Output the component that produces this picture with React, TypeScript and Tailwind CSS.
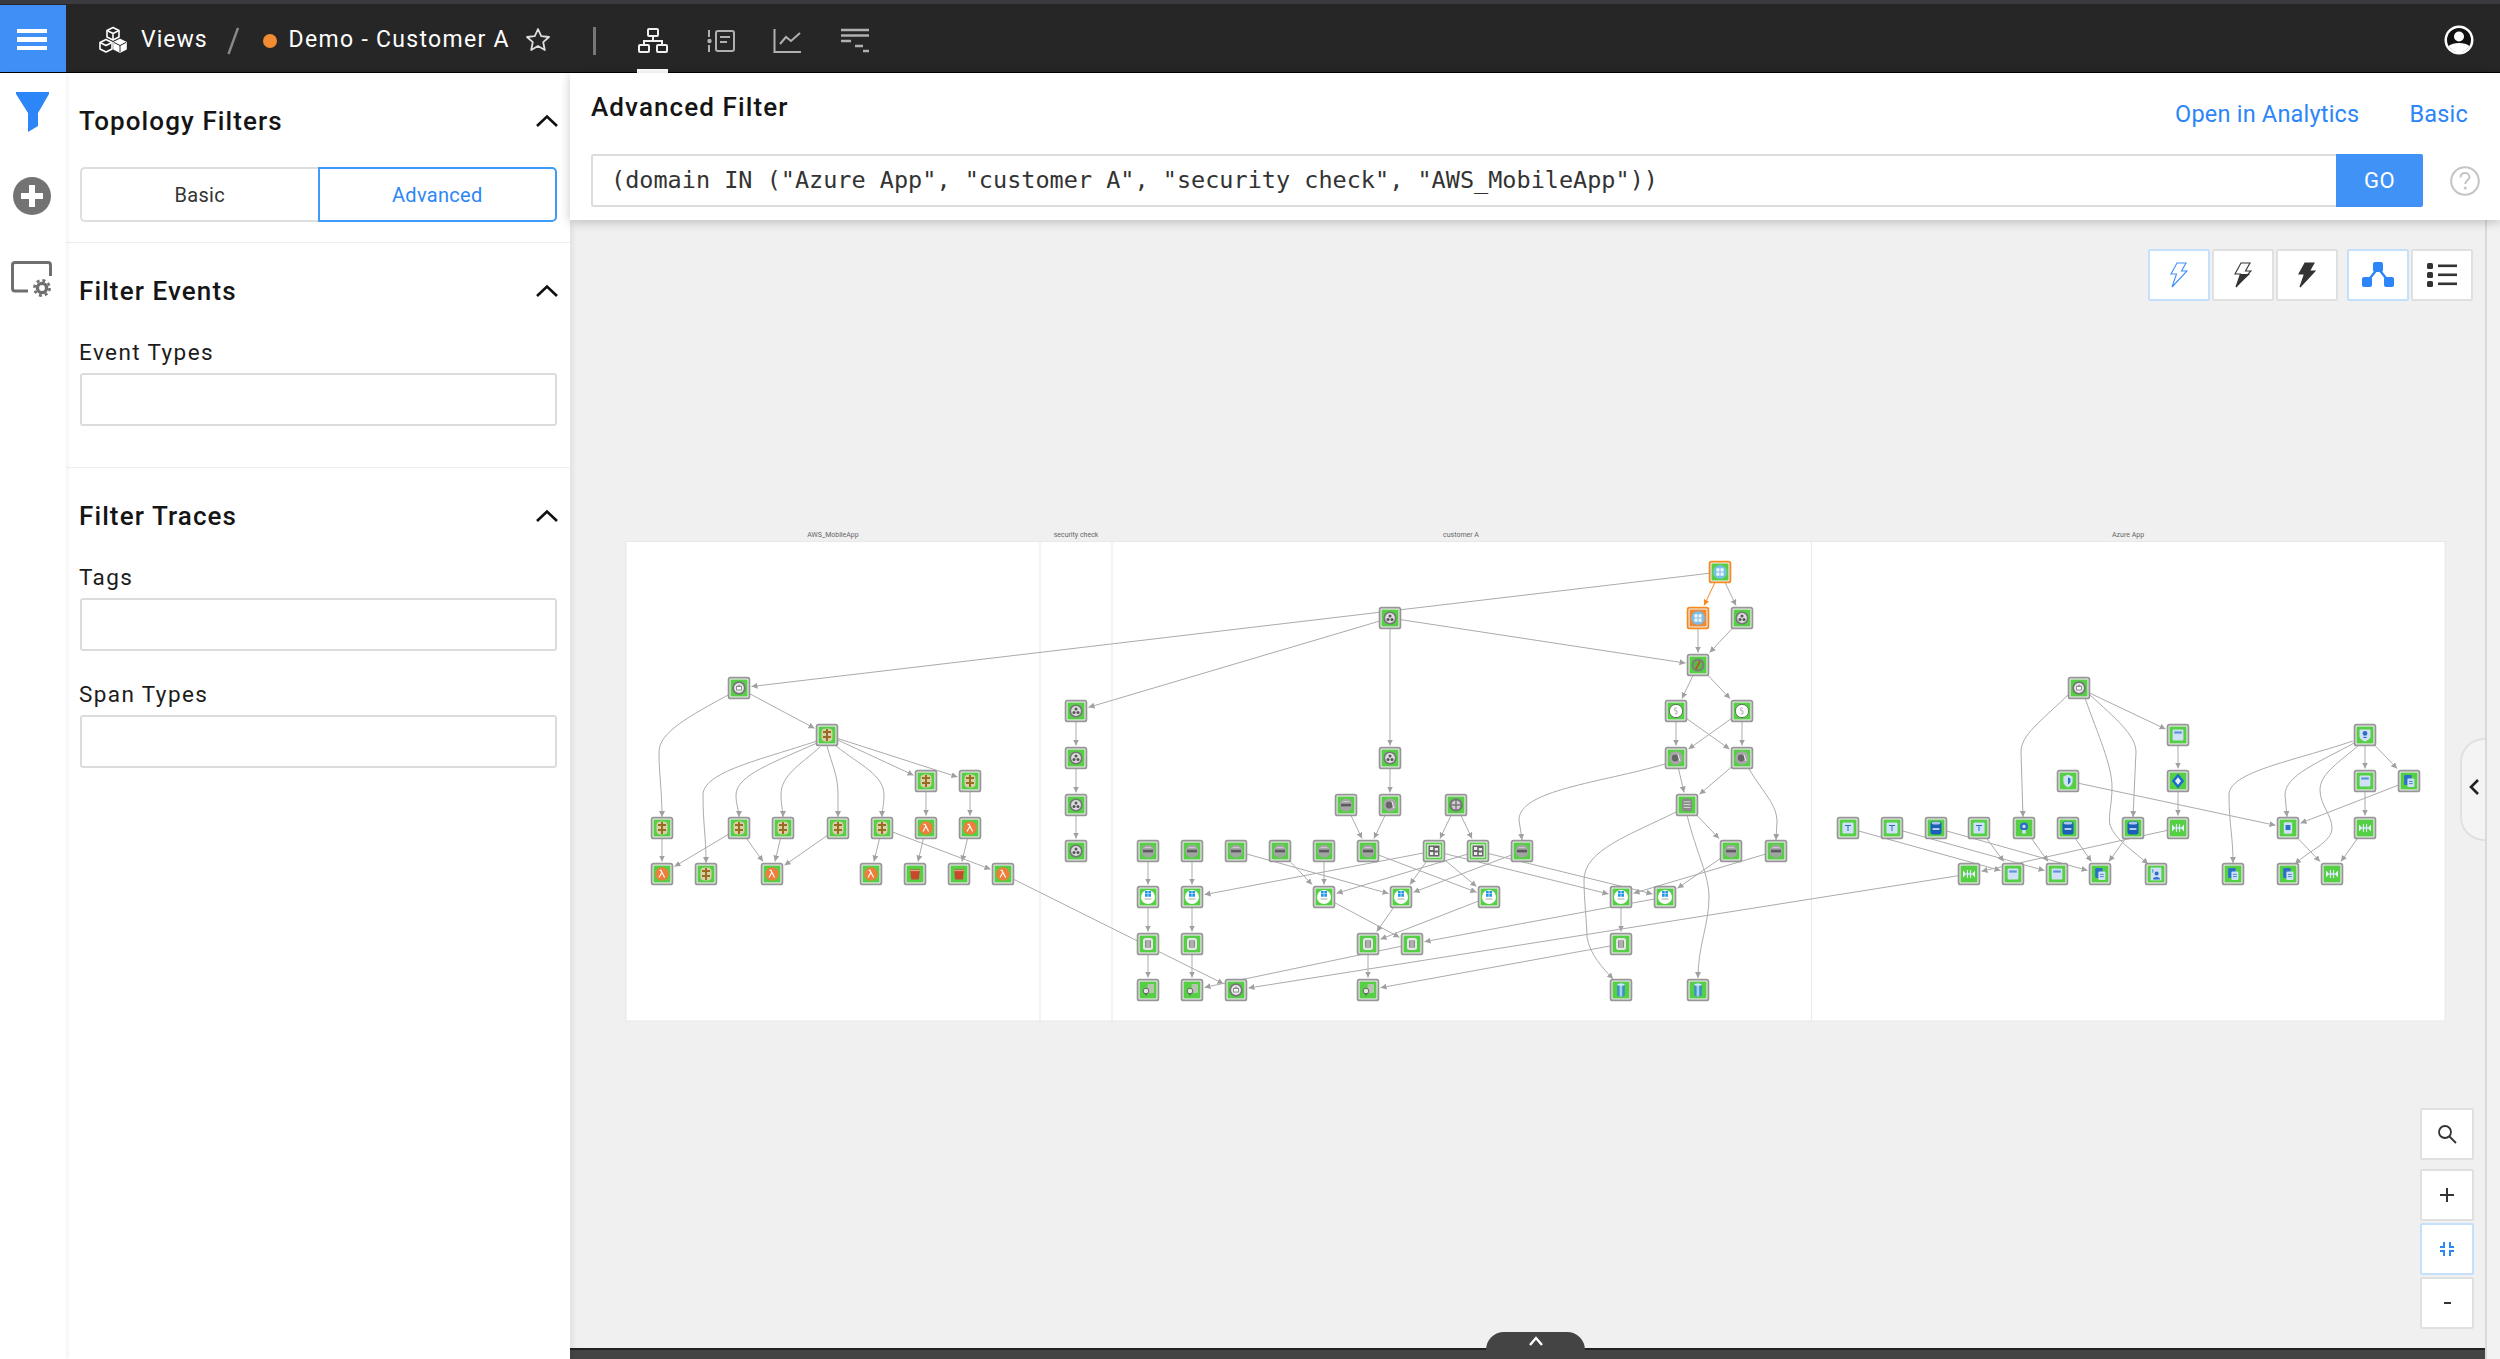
import React from "react";

type Kind = "gw" | "api" | "lam" | "bucket" | "hub" | "web" | "win" | "chip" | "pin" | "grid" | "globe" | "mag" | "clock" | "compass" | "dbgray" | "db" | "azwin" | "table" | "sql" | "bulb" | "dumb" | "shield" | "shieldd" | "diamond" | "phone" | "store" | "doc" | "person";
type N = [number, number, Kind, number?];

const nodes: N[] = [
  [739, 688, "gw"], [827, 735, "api"], [926, 781, "api"], [970, 781, "api"],
  [662, 828, "api"], [739, 828, "api"], [783, 828, "api"], [838, 828, "api"], [882, 828, "api"], [926, 828, "lam"], [970, 828, "lam"],
  [662, 874, "lam"], [706, 874, "api"], [772, 874, "lam"], [871, 874, "lam"], [915, 874, "bucket"], [959, 874, "bucket"], [1003, 874, "lam"],
  [1076, 711, "hub"], [1076, 758, "hub"], [1076, 805, "hub"], [1076, 851, "hub"],
  [1720, 572, "azwin", 1], [1698, 618, "azwin", 2], [1742, 618, "hub"], [1390, 618, "hub"], [1698, 665, "compass"],
  [1676, 711, "clock"], [1742, 711, "clock"], [1676, 758, "mag"], [1742, 758, "mag"], [1390, 758, "hub"],
  [1346, 805, "web"], [1390, 805, "mag"], [1456, 805, "globe"], [1687, 805, "dbgray"],
  [1148, 851, "web"], [1192, 851, "web"], [1236, 851, "web"], [1280, 851, "web"], [1324, 851, "web"], [1368, 851, "web"], [1434, 851, "grid"], [1478, 851, "grid"], [1522, 851, "web"], [1731, 851, "web"], [1776, 851, "web"],
  [1148, 897, "win"], [1192, 897, "win"], [1324, 897, "win"], [1401, 897, "win"], [1489, 897, "win"], [1621, 897, "win"], [1665, 897, "win"],
  [1148, 944, "chip"], [1192, 944, "chip"], [1368, 944, "chip"], [1412, 944, "chip"], [1621, 944, "chip"],
  [1148, 990, "pin"], [1192, 990, "pin"], [1236, 990, "gw"], [1368, 990, "pin"], [1621, 990, "db"], [1698, 990, "db"],
  [2079, 688, "gw"], [2178, 735, "store"], [2365, 735, "shieldd"], [2068, 781, "shield"], [2178, 781, "diamond"], [2365, 781, "store"], [2409, 781, "doc"],
  [1848, 828, "table"], [1892, 828, "table"], [1936, 828, "sql"], [1979, 828, "table"], [2024, 828, "bulb"], [2068, 828, "sql"], [2133, 828, "sql"], [2178, 828, "dumb"], [2288, 828, "phone"], [2365, 828, "dumb"],
  [1969, 874, "dumb"], [2013, 874, "store"], [2057, 874, "store"], [2100, 874, "doc"], [2156, 874, "person"], [2233, 874, "doc"], [2288, 874, "doc"], [2332, 874, "dumb"],
];

const straight: [number, number, number, number, number?][] = [
  [1720, 572, 739, 688], [739, 688, 827, 735], [827, 735, 926, 781], [827, 735, 970, 781], [926, 781, 926, 828], [970, 781, 970, 828],
  [662, 828, 662, 874], [739, 828, 662, 874], [739, 828, 772, 874], [783, 828, 772, 874], [838, 828, 772, 874], [882, 828, 871, 874], [926, 828, 915, 874], [970, 828, 959, 874], [882, 828, 1003, 874], [1003, 874, 1236, 990],
  [1390, 618, 1076, 711], [1076, 711, 1076, 758], [1076, 758, 1076, 805], [1076, 805, 1076, 851],
  [1390, 618, 1698, 665], [1390, 618, 1390, 758], [1390, 758, 1390, 805], [1346, 805, 1368, 851], [1390, 805, 1368, 851], [1456, 805, 1434, 851], [1456, 805, 1478, 851],
  [1720, 572, 1698, 618, 1], [1720, 572, 1742, 618], [1698, 618, 1698, 665], [1742, 618, 1698, 665], [1698, 665, 1676, 711], [1698, 665, 1742, 711],
  [1676, 711, 1676, 758], [1676, 711, 1742, 758], [1742, 711, 1676, 758], [1742, 711, 1742, 758], [1676, 758, 1687, 805], [1742, 758, 1687, 805], [1687, 805, 1731, 851],
  [1148, 851, 1148, 897], [1148, 897, 1148, 944], [1148, 944, 1148, 990], [1192, 851, 1192, 897], [1192, 897, 1192, 944], [1192, 944, 1192, 990],
  [1236, 851, 1401, 897], [1280, 851, 1324, 897], [1324, 851, 1324, 897], [1368, 851, 1489, 897], [1434, 851, 1192, 897], [1478, 851, 1324, 897], [1434, 851, 1401, 897], [1434, 851, 1489, 897], [1434, 851, 1621, 897], [1478, 851, 1665, 897], [1522, 851, 1401, 897], [1731, 851, 1665, 897], [1776, 851, 1621, 897],
  [1324, 897, 1412, 944], [1401, 897, 1368, 944], [1489, 897, 1368, 944], [1665, 897, 1412, 944], [1621, 897, 1621, 944], [1368, 944, 1368, 990], [1412, 944, 1192, 990], [1621, 944, 1368, 990], [1969, 874, 1236, 990],
  [2079, 688, 2178, 735], [2178, 735, 2178, 781], [2178, 781, 2178, 828], [2068, 781, 2288, 828], [2178, 828, 1969, 874],
  [1848, 828, 2013, 874], [1892, 828, 2057, 874], [1936, 828, 2100, 874], [1979, 828, 2013, 874], [2024, 828, 2057, 874], [2068, 828, 2100, 874], [2133, 828, 2100, 874],
  [2365, 735, 2365, 781], [2365, 735, 2409, 781], [2365, 781, 2365, 828], [2409, 781, 2288, 828], [2288, 828, 2332, 874], [2365, 828, 2332, 874],
];

const curves = [
  "M728,695 C690,716 659,732 659,752 C659,775 662,790 662,817",
  "M817,741 C760,760 703,772 703,795 C703,825 706,835 706,863",
  "M817,743 C775,762 736,775 736,795 C736,805 739,810 739,817",
  "M820,747 C800,765 781,775 781,795 C781,805 783,810 783,817",
  "M827,746 C832,765 838,775 838,795 L838,817",
  "M836,746 C860,765 884,775 884,795 C884,805 882,810 882,817",
  "M1749,769 C1765,795 1777,805 1777,822 L1776,840",
  "M1665,764 C1600,783 1519,790 1519,820 L1522,840",
  "M1676,812 C1630,835 1584,850 1584,880 C1584,900 1587,925 1587,937 C1590,955 1603,968 1613,979",
  "M1687,815 C1697,855 1709,875 1709,897 C1709,925 1698,945 1698,978",
  "M2068,695 C2040,722 2021,735 2021,752 L2023,817",
  "M2090,695 C2115,718 2136,735 2136,752 L2133,817",
  "M2085,698 C2098,735 2112,765 2112,787 C2112,805 2108,815 2110,825 C2115,840 2135,852 2148,864",
  "M2353,741 C2290,762 2229,772 2229,795 C2229,825 2233,835 2233,863",
  "M2354,743 C2320,762 2285,775 2285,795 L2287,817",
  "M2358,746 C2335,765 2320,775 2320,790 C2320,805 2332,815 2332,828 C2332,842 2310,850 2295,864",
];

function clip(x1: number, y1: number, x2: number, y2: number) {
  const dx = x2 - x1, dy = y2 - y1;
  const h = 12.5;
  const t = Math.min(dx === 0 ? 9e9 : h / Math.abs(dx), dy === 0 ? 9e9 : h / Math.abs(dy));
  return [x2 - dx * t, y2 - dy * t];
}

function Icon({ k }: { k: Kind }) {
  const g = "#77777a";
  const b = "#2b6fc9";
  const lb = "#cfe0f7";
  switch (k) {
    case "gw":
      return <g><circle r="6.8" fill={g} /><circle r="4.9" fill="#e8e8e8" /><rect x="-2.4" y="-1.6" width="4.8" height="3.6" fill="#fff" stroke={g} strokeWidth=".8" /><path d="M-1.3-1.6a1.3 1.4 0 0 1 2.6 0" fill="none" stroke={g} strokeWidth=".8" /></g>;
    case "api":
      return <g><rect x="-5.5" y="-6.5" width="11" height="13" rx="4" fill="#d9d0a8" /><path d="M0-6V6M-4-3H4M-4 2H4" stroke="#9a6c22" strokeWidth="2" /></g>;
    case "lam":
      return <g><circle r="6.8" fill="#ed7f3d" /><path d="M-2.4-3.6H-1L2.6 3.6M-.2-1.4L-3 3.6" fill="none" stroke="#fff" strokeWidth="1.1" /></g>;
    case "bucket":
      return <g><path d="M-5-4.5H5L3.8 5.5H-3.8Z" fill="#c9472f" /><path d="M-5-3.4H5" stroke="#eec0b4" strokeWidth=".8" /></g>;
    case "hub":
      return <g><circle r="6.6" fill={g} /><circle r="4.9" fill="#dcdcdc" /><circle cy="-2" r="1.5" fill="#555" /><circle cx="-2" cy="1.6" r="1.5" fill="#555" /><circle cx="2" cy="1.6" r="1.5" fill="#555" /></g>;
    case "web":
      return <g><circle r="6.6" fill="#a4a4a4" /><rect x="-5" y="-1.2" width="10" height="2.6" fill="#5c5c5c" /><path d="M-3.4-3.4H3.4" stroke="#d8d8d8" strokeWidth=".8" /></g>;
    case "win":
      return <g><circle r="7" fill="#fff" /><path d="M-3-6H-.3V-3.4H-3ZM.3-6H3V-3.4H.3ZM-3-2.9H-.3V-.3H-3ZM.3-2.9H3V-.3H.3Z" fill="#2196e8" /><path d="M-3.5 2H3.5" stroke="#aaa" strokeWidth="1" /></g>;
    case "chip":
      return <g><rect x="-5" y="-6" width="10" height="12" rx="2.5" fill="#e6e6e6" /><rect x="-3" y="-3.6" width="6" height="7.2" fill="#8a8a8a" /><path d="M-2-2H2M-2 0H2M-2 2H2" stroke="#e6e6e6" strokeWidth=".8" /></g>;
    case "pin":
      return <g><rect x="-.5" y="-6" width="6.5" height="9" rx="1" fill="#b8c4b0" /><circle cx="-2" cy="1" r="2.8" fill="#e6e6e6" stroke="#666" strokeWidth="1" /><path d="M-3.6 3L-2 6.2L-.4 3" fill="#666" /></g>;
    case "grid":
      return <g><rect x="-6.6" y="-6.6" width="13.2" height="13.2" fill="#fff" /><rect x="-5.6" y="-5.6" width="11.2" height="11.2" fill="#666" /><path d="M-4-4H-.8V-1H-4ZM.8-3H4V-.4H.8ZM-4 1H-.8V4H-4ZM.8 1.4H4V4H.8Z" fill="#eee" /></g>;
    case "globe":
      return <g><circle r="6.8" fill={g} /><circle r="4.6" fill="#cfcfcf" /><path d="M-5 0H5M0-5V5" stroke={g} strokeWidth="1.4" /></g>;
    case "mag":
      return <g><circle r="6.8" fill="#a7a7a7" /><circle cx="-.8" r="3.4" fill="#666" /><path d="M1.8-3.6L4 3" stroke="#eee" strokeWidth="1" /></g>;
    case "clock":
      return <g><circle r="6.6" fill="#fff" stroke="#333" strokeWidth=".6" /><path d="M1-3H-1.2V-.2H1V2.8H-1.2" fill="none" stroke="#999" strokeWidth=".8" /></g>;
    case "compass":
      return <g><circle r="6.6" fill="#77807a" /><circle r="4.6" fill="#5cb845" /><path d="M2.2-4.4L-2.2 4.4" stroke="#d43c30" strokeWidth="1.3" /></g>;
    case "dbgray":
      return <g><rect x="-5" y="-6.5" width="10" height="13" rx="3" fill="#8a8a8a" /><path d="M-3.4-3.2H3.4M-3.4-.4H3.4M-3.4 2.4H3.4" stroke="#d8d8d8" strokeWidth="1" /></g>;
    case "db":
      return <g><rect x="-3.8" y="-6.5" width="7.6" height="13" rx="2" fill="#3d8fc8" /><rect x="-1.4" y="-6.5" width="2.6" height="13" fill="#9fd2ea" /><ellipse cy="-5.4" rx="3.8" ry="1.2" fill="#cfeaf5" /></g>;
    case "azwin":
      return <g><circle r="6.8" fill="#7bbfe8" /><path d="M-3.6-3.8H-.5V-.5H-3.6ZM.5-3.8H3.6V-.5H.5ZM-3.6.5H-.5V3.8H-3.6ZM.5.5H3.6V3.8H.5Z" fill="#eef8fd" /></g>;
    case "table":
      return <g><rect x="-5.6" y="-5.6" width="11.2" height="11.2" rx="1" fill={lb} /><path d="M-3-2.5H3M0-2.5V3" stroke={b} strokeWidth="1" /></g>;
    case "sql":
      return <g><rect x="-5.5" y="-6.5" width="11" height="13" rx="2.5" fill="#1c5fb8" /><ellipse cy="-4.8" rx="4.4" ry="1.4" fill="#a9c8ee" /><path d="M-3.4 1H3.4" stroke="#dbe8f8" strokeWidth="1.6" /></g>;
    case "bulb":
      return <g><circle cy="-1.6" r="4" fill={b} /><rect x="-1.8" y="2" width="3.6" height="3.6" fill={lb} /><circle cy="-1.6" r="1.6" fill={lb} /></g>;
    case "dumb":
      return <g><path d="M-6-3.4L-2.8 0L-6 3.4ZM6-3.4L2.8 0L6 3.4Z" fill="#eaf1fb" /><rect x="-2.8" y="-1.2" width="5.6" height="2.4" fill="#bcd3f0" /><path d="M-1.6-4V4M1.6-4V4" stroke="#eaf1fb" strokeWidth="1" /></g>;
    case "shield":
      return <g><path d="M0-6.5L4.6-4.6V.4C4.6 3.4 2 5.4 0 6.5C-2 5.4-4.6 3.4-4.6.4V-4.6Z" fill={lb} /><path d="M0-3.6L2.4-2.6V.6C2.4 2 1 3 0 3.6Z" fill={b} /></g>;
    case "shieldd":
      return <g><path d="M-5.5-5.5H5.5V1.5C5.5 4 2 5.6 0 6.5C-2 5.6-5.5 4-5.5 1.5Z" fill={lb} /><circle cy="-1.6" r="2.4" fill={b} /><path d="M-1.6 2.4H1.6" stroke={b} strokeWidth="1.2" /></g>;
    case "diamond":
      return <g><path d="M0-7.4L6.2 0L0 7.4L-6.2 0Z" fill="#1c6cd0" /><path d="M0-3.8L3 0L0 3.8L-3 0Z" fill="#e8f1fc" /></g>;
    case "phone":
      return <g><rect x="-4.2" y="-5.8" width="8.4" height="11.6" rx="1" fill={lb} /><rect x="-2.4" y="-3" width="4.8" height="5" fill={b} /></g>;
    case "store":
      return <g><rect x="-5.4" y="-5.4" width="10.8" height="10.8" rx="1" fill={lb} /><rect x="-3.8" y="-3.6" width="7.6" height="2.2" fill="#5d93d8" /></g>;
    case "doc":
      return <g><rect x="-4.8" y="-6" width="7.4" height="10" rx="1" fill={b} /><rect x="-1.6" y="-2.4" width="7" height="8.4" rx="1" fill={lb} /><path d="M0 .4H3.8M0 2.6H3.8" stroke={b} strokeWidth=".8" /></g>;
    case "person":
      return <g><rect x="-5.4" y="-6.4" width="10.8" height="12.8" fill={lb} /><circle cx=".6" cy="-.6" r="2" fill={b} /><path d="M-3 5.4C-3 2.2 4 2.2 4 5.4Z" fill={b} /><path d="M-3.4-5V-1M-3.4-3H-1.8" stroke="#5d93d8" strokeWidth=".8" /></g>;
  }
}

function Node({ n }: { n: N }) {
  const [x, y, k, o] = n;
  const border = o ? "#f68a1f" : "#969696";
  const fill = o === 2 ? "#ec8a3a" : "#55cf44";
  return (
    <g transform={`translate(${x} ${y})`}>
      <rect x="-10.4" y="-10.4" width="20.8" height="20.8" rx="2" fill="#ececec" stroke={border} strokeWidth="1.8" />
      <rect x="-8.4" y="-8.4" width="16.8" height="16.8" fill={fill} />
      <Icon k={k} />
    </g>
  );
}

function Board() {
  return (
    <svg width="1830" height="500" viewBox="620 525 1830 500" className="block">
      <defs>
        <marker id="ar" markerWidth="7" markerHeight="7" refX="6" refY="3" orient="auto" markerUnits="userSpaceOnUse">
          <path d="M0 0L6 3L0 6Z" fill="#a0a0a0" />
        </marker>
        <marker id="ao" markerWidth="7" markerHeight="7" refX="6" refY="3" orient="auto" markerUnits="userSpaceOnUse">
          <path d="M0 0L6 3L0 6Z" fill="#f68a1f" />
        </marker>
      </defs>
      <rect x="626" y="541.5" width="1819" height="479.5" fill="#fff" stroke="#e8e8e8" />
      <path d="M1040 542V1021M1112 542V1021M1811.5 542V1021" stroke="#ebebeb" strokeWidth="1.2" />
      <g fontFamily="Roboto, sans-serif" fontSize="7" fill="#666" textAnchor="middle">
        <text x="833" y="537">AWS_MobileApp</text>
        <text x="1076" y="537">security check</text>
        <text x="1461" y="537">customer A</text>
        <text x="2128" y="537">Azure App</text>
      </g>
      <g fill="none" stroke="#ababab" strokeWidth="1">
        {straight.map((e, i) => {
          const [x, y] = clip(e[0], e[1], e[2], e[3]);
          return <line key={i} x1={e[0]} y1={e[1]} x2={x} y2={y} stroke={e[4] ? "#f68a1f" : undefined} markerEnd={e[4] ? "url(#ao)" : "url(#ar)"} />;
        })}
        {curves.map((d, i) => <path key={i} d={d} markerEnd="url(#ar)" />)}
      </g>
      {nodes.map((n, i) => <Node key={i} n={n} />)}
    </svg>
  );
}

function Chevron() {
  return (
    <svg width="24" height="14" viewBox="0 0 24 14" fill="none"><path d="M2 12L12 2.5L22 12" stroke="#111" strokeWidth="2.6" /></svg>
  );
}

function Title({ children }: { children: React.ReactNode }) {
  return (
    <div className="-mr-[3px] flex h-[32px] items-center justify-between">
      <span className="-ml-[1px] text-[26px] leading-[32px] font-medium tracking-[1.1px] text-[#151515]">{children}</span>
      <Chevron />
    </div>
  );
}

function Field({ label, className }: { label: string; className: string }) {
  return (
    <div className={className}>
      <div className="-ml-[1px] h-[26px] text-[22.5px] leading-[26px] tracking-[1.4px] text-[#1c1c1c]">{label}</div>
      <div className="mt-[8px] h-[53px] w-[477px] rounded-[3px] border-2 border-[#dcdcdc] bg-white" />
    </div>
  );
}

function ToolBtn({ children, active, w = "w-[62px]" }: { children: React.ReactNode; active?: boolean; w?: string }) {
  return (
    <div className={`flex h-[52px] ${w} items-center justify-center rounded-[2px] border-2 bg-white ${active ? "border-[#c4e0fb]" : "border-[#e0e0e0]"}`}>
      {children}
    </div>
  );
}

function Bolt({ mode }: { mode: 0 | 1 | 2 }) {
  const c = mode === 0 ? "#3f8ff7" : "#333";
  return (
    <svg width="18" height="26" viewBox="0 0 18 26">
      <path d="M7 1H16L11.5 9H17L2 25L6.5 12H1Z" fill={mode === 2 ? c : "none"} stroke={c} strokeWidth="1.1" />
      {mode === 1 && <path d="M1 12H16L2 25L6.5 12Z" fill={c} />}
    </svg>
  );
}

export default function App() {
  return (
    <div className="flex h-[1359px] w-[2500px] flex-col overflow-hidden bg-white font-['Roboto',sans-serif] text-[#222]">
      <div className="h-[4px] shrink-0 bg-[#3a3b3f]" />
      <header className="flex h-[69px] shrink-0 items-center border-b border-black bg-[#262626] pt-[5px] text-white">
        <div className="flex h-[67px] w-[66px] shrink-0 flex-col items-center justify-center gap-[4.3px] self-end bg-[#3f8ff7] pr-[2px] pt-[2px]">
          <div className="h-[4.4px] w-[30px] bg-white" />
          <div className="h-[4.4px] w-[30px] bg-white" />
          <div className="h-[4.4px] w-[30px] bg-white" />
        </div>
        <svg className="ml-[32px] mb-[1px]" width="30" height="28" viewBox="0 0 30 28" fill="none" stroke="#fff" strokeWidth="1.6" strokeLinejoin="round">
          <path d="M15 1.5L21 4.5V11L15 14L9 11V4.5Z" /><path d="M9 4.5L15 7.5L21 4.5M15 7.5V14" />
          <path d="M8 13.5L14 16.5V23L8 26L2 23V16.5Z" fill="#262626" /><path d="M2 16.5L8 19.5L14 16.5" />
          <path d="M22 13.5L28 16.5V23L22 26L16 23V16.5Z" fill="#fff" /><path d="M16 16.5L22 19.5L28 16.5M22 19.5V26" stroke="#262626" strokeWidth="1" />
        </svg>
        <span className="ml-[13px] text-[23px] tracking-[1px]">Views</span>
        <svg className="ml-[19px]" width="12" height="28" viewBox="0 0 12 28"><path d="M11 1L1.5 27" stroke="#8a8a8a" strokeWidth="2.4" /></svg>
        <div className="ml-[24px] h-[14px] w-[14px] rounded-full bg-[#f28c33]" />
        <span className="ml-[12px] text-[23px] tracking-[1.3px]">Demo - Customer A</span>
        <svg className="ml-[15px] mb-[2px]" width="26" height="25" viewBox="0 0 26 25"><path d="M13 2L16.2 9.2L24 10L18.2 15.2L19.8 23L13 19L6.2 23L7.8 15.2L2 10L9.8 9.2Z" fill="none" stroke="#ddd" strokeWidth="1.8" strokeLinejoin="round" /></svg>
        <div className="ml-[42px] h-[28px] w-[3px] bg-[#777]" />
        <div className="relative ml-[42px] flex h-full w-[30px] items-center justify-center">
          <svg width="30" height="26" viewBox="0 0 30 26" fill="none" stroke="#f0f0f0" strokeWidth="2"><rect x="10" y="1" width="10" height="7" rx="1" /><rect x="1" y="17" width="10" height="7" rx="1" /><rect x="19" y="17" width="10" height="7" rx="1" /><path d="M15 8V13M6 17V13H24V17" /></svg>
          <div className="absolute bottom-[-1px] h-[4px] w-[31px] bg-white" />
        </div>
        <svg className="ml-[39px]" width="28" height="24" viewBox="0 0 28 24" fill="none" stroke="#b0b0b0" strokeWidth="2"><path d="M2 1V8M2 16V23" /><circle cx="2.5" cy="12" r="2.2" fill="#b0b0b0" stroke="none" /><rect x="9" y="2" width="18" height="20" rx="2" /><path d="M13 8H23M13 13H20" /></svg>
        <svg className="ml-[38px]" width="28" height="26" viewBox="0 0 28 26" fill="none" stroke="#b0b0b0" strokeWidth="2"><path d="M1.5 1V24H28" /><path d="M7 16L13 9L18 13L27 5" /></svg>
        <svg className="ml-[40px]" width="28" height="25" viewBox="0 0 28 25" fill="none" stroke="#b0b0b0" strokeWidth="2.6"><path d="M0 2H28M0 7.5H28M0 13H10M14 18H22M22 23H28" /></svg>
        <svg className="ml-auto mr-[26px] mb-[1px]" width="30" height="30" viewBox="0 0 30 30"><circle cx="15" cy="15" r="14.5" fill="#fff" /><circle cx="15" cy="15" r="12" fill="#111" /><circle cx="15" cy="11.5" r="5" fill="#fff" /><path d="M4.5 21C9 17 21 17 25.5 21C23 25 19 27.5 15 27.5C11 27.5 7 25 4.5 21Z" fill="#fff" /></svg>
      </header>

      <div className="flex min-h-0 flex-1">
        <aside className="relative z-20 flex w-[66px] shrink-0 flex-col items-center bg-white shadow-[2px_0_4px_rgba(0,0,0,0.05)]">
          <svg className="-ml-[2px] mt-[19px]" width="33" height="40" viewBox="0 0 33 40"><path d="M0 0H33V2L22 21V34L12 40V21L0 2Z" fill="#2c86f8" /></svg>
          <svg className="-ml-[2px] mt-[45px]" width="38" height="38" viewBox="0 0 38 38"><circle cx="19" cy="19" r="19" fill="#737373" /><path d="M16 8H22V16H30V22H22V30H16V22H8V16H16Z" fill="#fff" /></svg>
          <svg className="-ml-[2px] mt-[46px]" width="42" height="38" viewBox="0 0 42 38" fill="none"><path d="M17 30H4C2.5 30 1.5 29 1.5 27.5V4C1.5 2.5 2.5 1.5 4 1.5H37C38.5 1.5 39.5 2.5 39.5 4V15" stroke="#6f6f6f" strokeWidth="3" /><circle cx="31" cy="27" r="4.6" stroke="#6f6f6f" strokeWidth="3.4" /><circle cx="31" cy="27" r="7.6" stroke="#6f6f6f" strokeWidth="2.6" strokeDasharray="3 3" /></svg>
        </aside>

        <section className="relative z-10 w-[504px] shrink-0 bg-white shadow-[2px_0_6px_rgba(0,0,0,0.08)]">
          <div className="h-[170px] border-b border-[#eeeeee] px-[14px] pt-[32px]">
            <Title>Topology Filters</Title>
            <div className="mt-[30px] flex h-[55px] w-[477px]">
              <div className="flex flex-1 items-center justify-center rounded-l-[5px] border-2 border-r-0 border-[#dedede] text-[20px] tracking-[0.3px] text-[#333]">Basic</div>
              <div className="flex flex-1 items-center justify-center rounded-r-[5px] border-2 border-[#3f9bf8] text-[20px] tracking-[0.3px] text-[#2c86f8]">Advanced</div>
            </div>
          </div>
          <div className="h-[225px] border-b border-[#eeeeee] px-[14px] pt-[32px]">
            <Title>Filter Events</Title>
            <Field label="Event Types" className="mt-[32px]" />
          </div>
          <div className="px-[14px] pt-[32px]">
            <Title>Filter Traces</Title>
            <Field label="Tags" className="mt-[32px]" />
            <Field label="Span Types" className="mt-[30px]" />
          </div>
        </section>

        <main className="flex min-w-0 flex-1 flex-col">
          <div className="relative z-10 h-[147px] shrink-0 bg-white pl-[21px] shadow-[0_2px_10px_rgba(0,0,0,0.22)]">
            <div className="flex h-[81px] items-start justify-between pr-[32px]">
              <span className="mt-[17px] text-[26px] leading-[34px] font-medium tracking-[1.1px] text-[#151515]">Advanced Filter</span>
              <div className="mt-[25px] flex gap-[50px] text-[23.5px] leading-[32px] tracking-[0.2px] text-[#2c86f8]">
                <span>Open in Analytics</span>
                <span>Basic</span>
              </div>
            </div>
            <div className="flex items-center">
              <div className="flex h-[53px] w-[1745px] items-center rounded-l-[3px] border-2 border-r-0 border-[#dcdcdc] pl-[18px] font-['DejaVu_Sans_Mono',monospace] text-[23.5px] whitespace-nowrap text-[#333]">
                (domain IN ("Azure App", "customer A", "security check", "AWS_MobileApp"))
              </div>
              <div className="flex h-[53px] w-[87px] items-center justify-center rounded-r-[2px] bg-[#4192f7] text-[22px] tracking-[0.5px] text-white">GO</div>
              <svg className="ml-[27px]" width="30" height="30" viewBox="0 0 30 30" fill="none"><circle cx="15" cy="15" r="13.8" stroke="#c4c4c4" strokeWidth="2" /><path d="M10.5 11.5C10.5 8.5 12.5 7 15 7C17.5 7 19.5 8.7 19.5 11C19.5 14 15.3 14.5 15.3 18" stroke="#c4c4c4" strokeWidth="2" /><circle cx="15.3" cy="22" r="1.5" fill="#c4c4c4" /></svg>
            </div>
          </div>

          <div className="flex min-h-0 flex-1">
            <div className="relative flex min-w-0 flex-1 flex-col bg-[#f0f0f0]">
              <div className="min-h-0 flex-1 pl-[50px] pt-[305px]">
                <Board />
              </div>
              <div className="h-[11px] shrink-0 border-t-2 border-[#222] bg-[#444]" />

              <div className="absolute right-[12px] top-[29px] flex gap-[9px]">
                <div className="flex gap-[2px]">
                  <ToolBtn active><Bolt mode={0} /></ToolBtn>
                  <ToolBtn><Bolt mode={1} /></ToolBtn>
                  <ToolBtn><Bolt mode={2} /></ToolBtn>
                </div>
                <div className="flex gap-[2px]">
                  <ToolBtn active>
                    <svg width="32" height="26" viewBox="0 0 32 26"><path d="M16 6L5 20M16 6L27 20" stroke="#2c86f8" strokeWidth="2.4" /><rect x="11" y="0" width="10" height="10" rx="2" fill="#2c86f8" /><rect x="0" y="15" width="10" height="10" rx="2" fill="#2c86f8" /><rect x="22" y="15" width="10" height="10" rx="2" fill="#2c86f8" /></svg>
                  </ToolBtn>
                  <ToolBtn>
                    <svg width="30" height="26" viewBox="0 0 30 26" fill="#333"><rect x="0" y="1" width="6" height="6" rx="1.5" /><rect x="0" y="10" width="6" height="6" rx="1.5" /><rect x="0" y="19" width="6" height="6" rx="1.5" /><rect x="11" y="2.5" width="19" height="2.6" /><rect x="11" y="11.5" width="19" height="2.6" /><rect x="11" y="20.5" width="19" height="2.6" /></svg>
                  </ToolBtn>
                </div>
              </div>

              <div className="absolute right-[11px] top-[888px] flex flex-col">
                <ToolBtn w="w-[54px]">
                  <svg width="20" height="20" viewBox="0 0 20 20" fill="none" stroke="#333" strokeWidth="1.8"><circle cx="8" cy="8" r="6" /><path d="M12.5 12.5L19 19" /></svg>
                </ToolBtn>
                <div className="h-[9px]" />
                <ToolBtn w="w-[54px]">
                  <svg width="16" height="16" viewBox="0 0 16 16" fill="none" stroke="#333" strokeWidth="2"><path d="M8 1V15M1 8H15" /></svg>
                </ToolBtn>
                <div className="h-[2px]" />
                <ToolBtn active w="w-[54px]">
                  <svg width="16" height="16" viewBox="0 0 16 16" fill="none" stroke="#2c86f8" strokeWidth="2"><path d="M5 1V6H1M11 1V6H15M5 15V10H1M11 15V10H15" /></svg>
                </ToolBtn>
                <div className="h-[2px]" />
                <ToolBtn w="w-[54px]">
                  <div className="h-[2.5px] w-[7px] bg-[#333]" />
                </ToolBtn>
              </div>

              <div className="absolute bottom-[9px] left-[916px] flex h-[18px] w-[99px] items-center justify-center rounded-t-[28px] bg-[#444]">
                <svg width="16" height="10" viewBox="0 0 16 10" fill="none" stroke="#fff" strokeWidth="2.4"><path d="M2 9L8 2L14 9" /></svg>
              </div>

              <div className="absolute right-0 top-[518px] flex h-[103px] w-[25px] items-center justify-center rounded-l-[24px] border-2 border-r-0 border-[#e0e0e0] bg-[#f4f4f4]">
                <svg className="mb-[6px]" width="12" height="18" viewBox="0 0 12 18" fill="none" stroke="#222" strokeWidth="2.6"><path d="M10 2L3 9L10 16" /></svg>
              </div>
            </div>
            <div className="w-[15px] shrink-0 border-l-2 border-[#dadada] bg-[#f2f2f2]" />
          </div>
        </main>
      </div>
    </div>
  );
}
